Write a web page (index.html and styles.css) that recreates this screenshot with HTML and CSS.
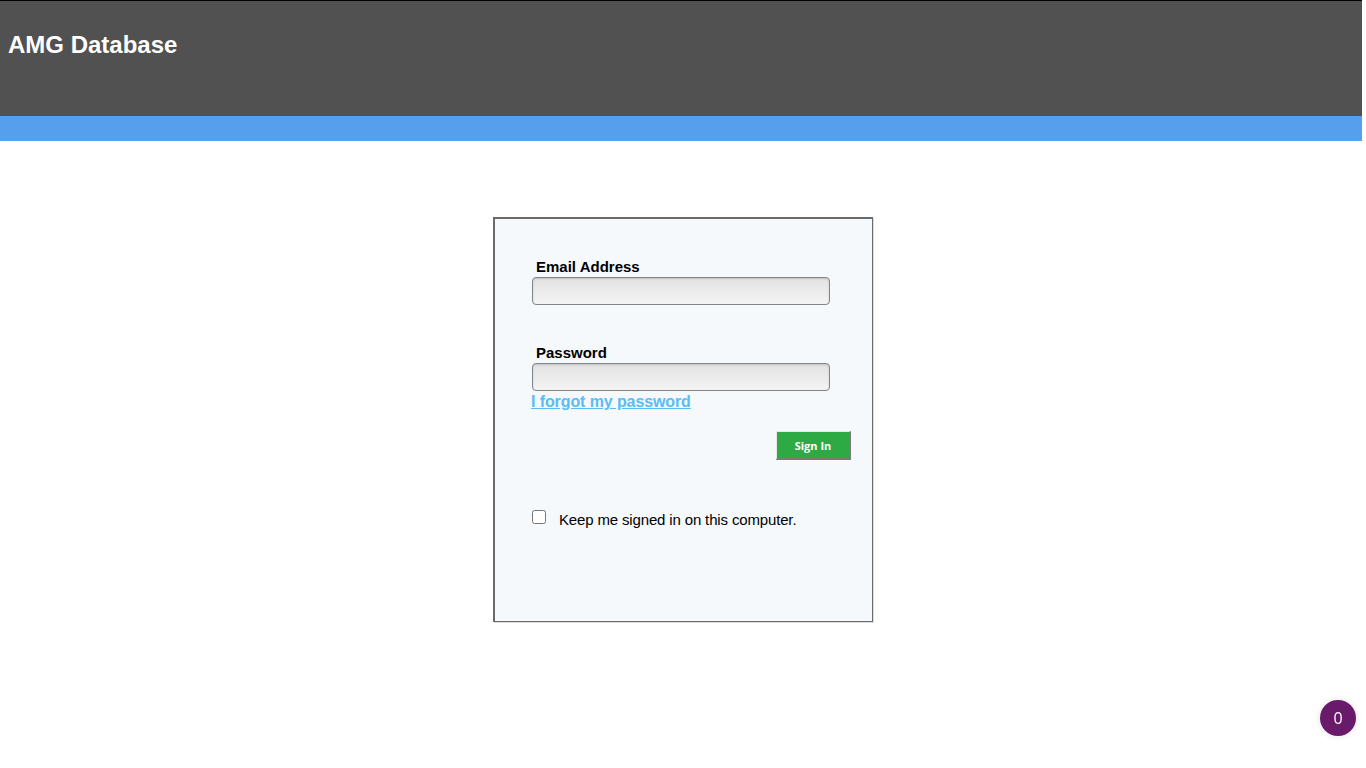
FILE: index.html
```html
<!DOCTYPE html>
<html lang="en">
<head>
    <meta charset="UTF-8">
    <meta name="viewport" content="width=device-width, initial-scale=1.0">
    <title>AMG Database - Sign In</title>
    <link rel="stylesheet" href="styles.css">
</head>
<body>
    <header class="site-header">
        <h1 class="site-title">AMG Database</h1>
    </header>
    <div class="site-strip"></div>

    <main class="login-page">
        <form class="login-box">
            <label class="field-label" for="email">Email Address</label>
            <input class="field-input" type="text" id="email">

            <label class="field-label field-label-gap" for="password">Password</label>
            <input class="field-input" type="password" id="password">
            <a class="forgot-link" href="#">I forgot my password</a>

            <div class="button-row">
                <button class="signin-button" type="button">Sign In</button>
            </div>

            <div class="remember-row">
                <input class="remember-check" type="checkbox" id="remember">
                <label class="remember-label" for="remember">Keep me signed in on this computer.</label>
            </div>
        </form>
    </main>

    <div class="count-badge">0</div>
</body>
</html>
```

FILE: styles.css
```css
:root {
    --header-color: #515151;
    --strip-color: #559fec;
    --box-color: #f5f9fc;
    --border-color: #6b6b6b;
    --link-color: #5bbcf5;
    --button-color: #2eaa44;
    --badge-color: #6a1a6a;
}

* {
    margin: 0;
    padding: 0;
    box-sizing: border-box;
}

body {
    font-family: 'Liberation Sans', Arial, sans-serif;
    background: #ffffff;
    color: #000000;
    min-height: 100vh;
}

.site-header {
    margin-right: 4px;
    height: 116px;
    background: var(--header-color);
    border-top: 1px solid #000000;
    padding: 30px 8px 0;
}

.site-title {
    color: #ffffff;
    font-size: 24px;
    font-weight: bold;
    line-height: 28px;
}

.site-strip {
    margin-right: 4px;
    height: 25px;
    background: var(--strip-color);
}

.login-page {
    display: flex;
    justify-content: center;
    padding-top: 76px;
}

.login-box {
    width: 380px;
    height: 405px;
    background: var(--box-color);
    border-top: 2px solid var(--border-color);
    border-left: 2px solid var(--border-color);
    border-right: 1px solid var(--border-color);
    border-bottom: 1px solid var(--border-color);
    box-shadow: 1px 1px 0 #dcdcdc;
    padding: 39px 0 0 37px;
    display: flex;
    flex-direction: column;
    align-items: flex-start;
}

.field-label {
    display: block;
    font-size: 15px;
    font-weight: bold;
    line-height: 18px;
    padding-left: 4px;
}

.field-label-gap {
    margin-top: 39px;
}

.field-input {
    margin-top: 1px;
    width: 298px;
    height: 28px;
    border: 1px solid #858585;
    border-radius: 4px;
    background: linear-gradient(#e2e2e2, #f4f4f4);
    box-shadow: inset 0 1px 2px rgba(0, 0, 0, 0.15);
    font-size: 14px;
    padding: 0 6px;
    outline: none;
}

.forgot-link {
    margin-top: 2px;
    margin-left: -1px;
    font-size: 16px;
    font-weight: bold;
    line-height: 18px;
    letter-spacing: -0.1px;
    color: var(--link-color);
    text-decoration: underline;
}

.button-row {
    align-self: stretch;
    display: flex;
    justify-content: flex-end;
    padding-right: 21px;
    margin-top: 20px;
}

.signin-button {
    width: 75px;
    height: 29px;
    background: var(--button-color);
    color: #ffffff;
    font-family: 'Open Sans', sans-serif;
    font-size: 11px;
    font-weight: bold;
    border-top: 1px solid #e8e8e8;
    border-left: 1px solid #e8e8e8;
    border-right: 2px solid #7a7a7a;
    border-bottom: 2px solid #7a7a7a;
    cursor: pointer;
}

.remember-row {
    display: flex;
    align-items: flex-start;
    margin-top: 50px;
}

.remember-check {
    width: 14px;
    height: 14px;
    margin: 0;
}

.remember-label {
    margin-left: 13px;
    font-size: 15px;
    line-height: 18px;
    letter-spacing: -0.15px;
    padding-top: 1px;
}

.count-badge {
    position: fixed;
    right: 10px;
    bottom: 32px;
    width: 36px;
    height: 36px;
    border-radius: 50%;
    background: var(--badge-color);
    color: #ffffff;
    font-family: 'Open Sans', sans-serif;
    font-size: 16px;
    display: flex;
    align-items: center;
    justify-content: center;
    box-shadow: 0 0 6px rgba(0, 0, 0, 0.12);
}
```
